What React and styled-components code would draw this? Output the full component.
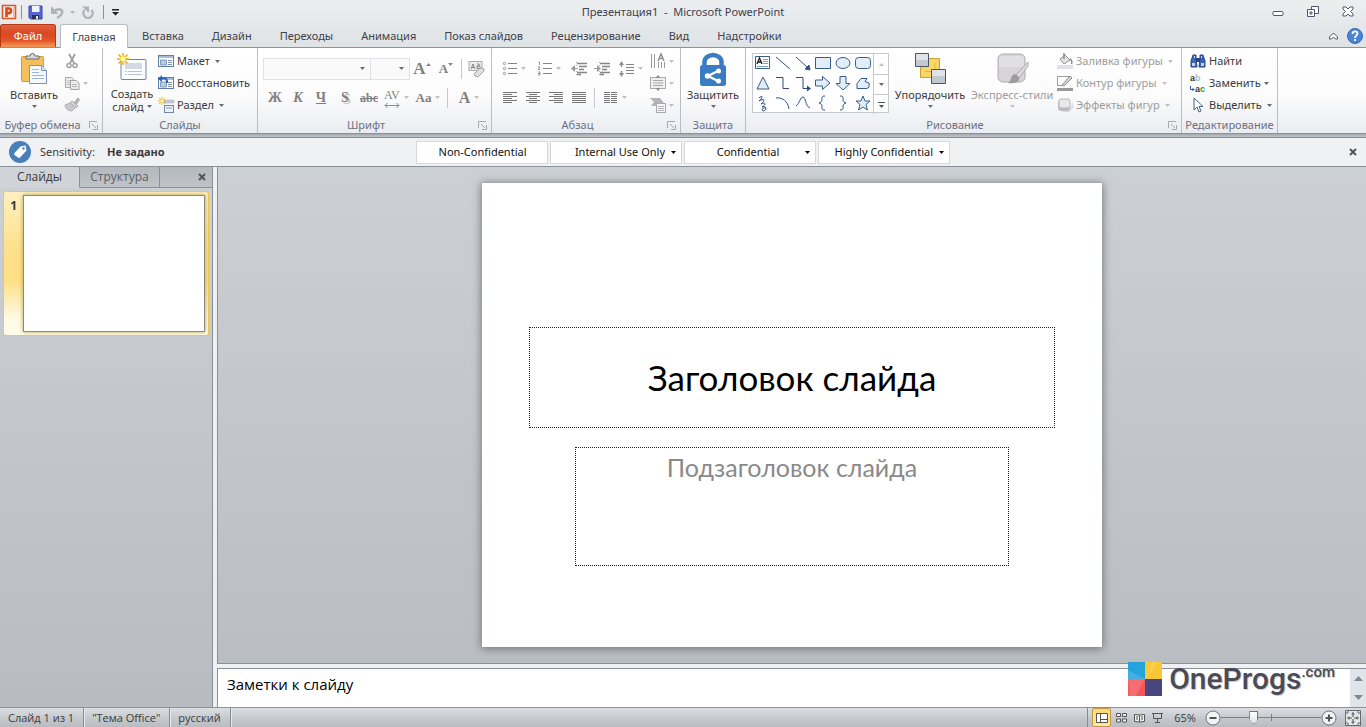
import React from 'react';
import styled, { createGlobalStyle, css } from 'styled-components';

const ui = '"Noto Sans", "Open Sans", sans-serif';
const narrow = '"Open Sans", "Noto Sans", sans-serif';

const color = {
  text: '#3b3b3b',
  disabled: '#9c9c9c',
  label: '#6d6f83',
  line: '#8b9097',
  shape: '#385d8a',
};

const GlobalStyle = createGlobalStyle`
  *, *::before, *::after { box-sizing: border-box; }
  body { margin: 0; }
  button, select, textarea, input { font: inherit; color: inherit; margin: 0; }
  button { border: 0; padding: 0; background: none; white-space: nowrap; }
`;

const Window = styled.div`
  display: flex;
  flex-direction: column;
  height: 100vh;
  min-height: 500px;
  overflow: hidden;
  background: #e3e6e9;
  font: 11px/14px ${ui};
  color: ${color.text};
`;

const Svg = styled.svg`
  display: block;
  flex: none;
  overflow: visible;
  width: ${p => p.$w || 16}px;
  height: ${p => p.$h || 16}px;
`;

const Icon = ({ w = 16, h = 16, children }) => (
  <Svg $w={w} $h={h} viewBox={`0 0 ${w} ${h}`} fill="none" aria-hidden="true">
    {children}
  </Svg>
);

const Arrow = ({ fill = '#6a6a6a' }) => (
  <Icon w={5} h={3}>
    <path d="M0 0h5L2.500 3z" fill={fill} />
  </Icon>
);

/* ---------- title bar ---------- */

const TitleBar = styled.header`
  display: grid;
  grid-template-columns: 1fr auto 1fr;
  align-items: center;
  height: 24px;
  flex: none;
  background: linear-gradient(#eceef0, #e6e9eb);
`;

const QuickAccess = styled.div`
  display: flex;
  align-items: center;
  gap: 4px;
  padding-left: 1px;

  button { padding: 0 2px; }
`;

const Title = styled.div`
  color: #3c4250;
  white-space: pre;
`;

const WindowButtons = styled.div`
  display: flex;
  justify-content: flex-end;
  gap: 23px;
  padding-right: 12px;
`;

const Divider = styled.span`
  width: 1px;
  height: ${p => p.$h || 14}px;
  margin: 0 ${p => p.$gap || 0}px;
  background: ${p => (p.$dark ? '#8e9298' : '#c6cad0')};
`;

const PlainButton = styled.button`
  display: flex;
  align-items: center;
  justify-content: center;
  gap: 3px;
`;

/* ---------- tabs ---------- */

const Tabs = styled.nav`
  display: flex;
  align-items: stretch;
  height: 24px;
  flex: none;
  background: linear-gradient(#e5e8eb, #dfe3e6);
  border-bottom: 1px solid #8d929a;
`;

const Tab = styled.button`
  padding: 0 14px;
  color: #3f4248;
  ${p => p.$file && css`
    width: 56px;
    margin-right: 4px;
    padding: 0;
    color: #fff;
    border: 1px solid #b53a12;
    border-bottom: 0;
    border-radius: 3px 3px 0 0;
    background: linear-gradient(#e2633f, #d94722 40%, #e2552a 70%, #f59a55);
  `}
  ${p => p.$active && css`
    width: 68px;
    padding: 0;
    height: 24px;
    border: 1px solid #b8bdc3;
    border-bottom: 0;
    border-radius: 3px 3px 0 0;
    background: #fff;
  `}
`;

const TabTools = styled.div`
  display: flex;
  align-items: center;
  gap: 9px;
  margin-left: auto;
  padding-right: 3px;
`;

/* ---------- ribbon ---------- */

const Ribbon = styled.div`
  display: flex;
  flex: none;
  height: 85px;
  background: linear-gradient(#fff, #fcfcfd 55%, #e9ecf0);
`;

const RibbonEdge = styled.div`
  flex: none;
  height: 5px;
  border: 1px solid #8a8f98;
  border-width: 1px 0;
  background: linear-gradient(#a3a8b0, #c2c6cb);
`;

const GroupBox = styled.section`
  display: flex;
  flex-direction: column;
  flex: none;
  width: ${p => p.$w}px;
  border-right: 1px solid #b9bec5;
`;

const GroupBody = styled.div`
  display: flex;
  height: 69px;
  padding: 2px 0 0 ${p => p.$pad}px;
`;

const GroupLabel = styled.div`
  display: flex;
  align-items: center;
  height: 16px;
  color: ${color.label};
  white-space: nowrap;

  span { flex: 1; text-align: center; }
  svg { margin: 0 4px; }
`;

const Group = ({ w, pad = 0, label, launcher, children }) => (
  <GroupBox $w={w}>
    <GroupBody $pad={pad}>{children}</GroupBody>
    <GroupLabel>
      <span>{label}</span>
      {launcher && (
        <Icon w={9} h={9}>
          <path d="M.5 7V.5H8M3 3l4 4M8.500 4v4.500H4" stroke="#a5a9b0" />
        </Icon>
      )}
    </GroupLabel>
  </GroupBox>
);

const BigButton = styled.button`
  display: flex;
  flex-direction: column;
  align-items: center;
  width: ${p => p.$w}px;
  height: 66px;
  padding-top: 3px;
  line-height: 13px;
  color: ${p => (p.disabled ? color.disabled : color.text)};

  > svg:first-child { margin-bottom: ${p => p.$gap || 4}px; }
  > svg:last-child { margin-top: 4px; }
`;

const Inline = styled.span`
  display: flex;
  align-items: center;
  gap: 3px;
`;

const Stack = styled.div`
  display: flex;
  flex-direction: column;
  align-items: flex-start;
`;

const RowButton = styled.button`
  display: flex;
  align-items: center;
  justify-content: center;
  gap: 3px;
  min-width: 16px;
  height: 22px;
  color: ${p => (p.disabled ? color.disabled : color.text)};

  > svg + span + svg { margin-left: 2px; }
`;

const Rows = styled.div`
  padding: 4px 1px 0 0;
`;

const Row = styled.div`
  display: flex;
  align-items: center;
  height: 29px;
`;

const Tool = styled.button`
  display: flex;
  align-items: center;
  justify-content: center;
  gap: 4px;
  width: ${p => p.$w || 24}px;
  height: 22px;
  color: #808080;
`;

const Glyph = styled.span`
  font: ${p => (p.$bold ? 'bold' : 'normal')} ${p => p.$size || 14}px/16px "Liberation Serif", serif;
  font-style: ${p => (p.$italic ? 'italic' : 'normal')};
  text-decoration: ${p => p.$line || 'none'};
  text-shadow: ${p => (p.$shadow ? '2px 2px 1px #bbb' : 'none')};
`;

const ComboBox = styled.span`
  display: flex;
  align-items: center;
  width: ${p => p.$w}px;
  height: 22px;
  margin-right: ${p => (p.$last ? 0 : -1)}px;
  padding-right: 5px;
  border: 1px solid #e0e2e6;
  background: #fafafb;

  select {
    flex: 1;
    min-width: 0;
    border: 0;
    background: none;
    appearance: none;
  }
`;

const Gallery = styled.div`
  display: grid;
  grid-template-columns: 1fr 15px;
  width: 137px;
  height: 60px;
  margin: 3px 4px 0 0;
  border: 1px solid #c5cad0;
  background: #fff;
`;

const Shapes = styled.div`
  display: grid;
  grid-template-columns: repeat(6, 20px);
  grid-auto-rows: 20px;
`;

const GalleryScroll = styled.div`
  display: grid;
  grid-template-rows: repeat(3, 1fr);

  button { border-left: 1px solid #c5cad0; }
  button + button { border-top: 1px solid #c5cad0; }
`;

/* ---------- sensitivity bar ---------- */

const Sensitivity = styled.div`
  display: grid;
  grid-template-columns: 1fr auto 1fr;
  align-items: center;
  flex: none;
  height: 29px;
  padding: 0 9px;
  border-bottom: 1px solid ${color.line};
  background: #eff1f3;
`;

const CurrentLabel = styled.div`
  display: flex;
  align-items: center;
  gap: 9px;

  strong { margin-left: 3px; }
`;

const LabelButtons = styled.div`
  display: flex;
  gap: 2px;
`;

const LabelButton = styled.button`
  display: flex;
  align-items: center;
  width: 132px;
  height: 23px;
  padding-right: 5px;
  border: 1px solid #d5d8dc;
  background: #fff;
  color: #111;

  span {
    flex: 1;
    text-align: ${p => (p.$end ? 'right' : 'center')};
    padding: ${p => (p.$end ? '0 6px 0 0' : '0 0 0 6px')};
  }
`;

const BarClose = styled(PlainButton)`
  justify-self: end;
`;

/* ---------- workspace ---------- */

const Workspace = styled.main`
  display: grid;
  grid-template-columns: 213px 1fr;
  flex: 1;
  min-height: 0;
`;

const SidePanel = styled.aside`
  border-right: 1px solid ${color.line};
  background: linear-gradient(#cdd1d6, #b8bbc0);
`;

const PanelTabs = styled.div`
  display: flex;
  height: 21px;
  background: linear-gradient(#b5b9be, #c0c4c9);
`;

const PanelTab = styled.button`
  width: 80px;
  border-right: 1px solid ${color.line};
  border-bottom: 1px solid ${p => (p.$active ? 'transparent' : color.line)};
  background: ${p => (p.$active ? '#d0d4d9' : 'none')};
  color: ${p => (p.$active ? '#3b3b3b' : '#5c6068')};
  font: 12px/16px ${narrow};
`;

const PanelClose = styled.button`
  display: flex;
  flex: 1;
  align-items: center;
  justify-content: flex-end;
  padding-right: 6px;
  border-bottom: 1px solid ${color.line};
`;

const Thumbnail = styled.button`
  display: flex;
  width: 206px;
  height: 145px;
  margin: 3px 0 0 3px;
  padding: 3px 3px 0 0;
  border: 1px solid #f0c850;
  border-radius: 3px;
  background: linear-gradient(#fdf0c0, #fde08a 40%, #fddf85 62%, #fffbe8 90%);

  span {
    width: 19px;
    padding: 4px 6px 0 0;
    text-align: right;
    font: bold 12px/14px ${ui};
  }
`;

const ThumbnailPage = styled.i`
  flex: 1;
  height: 137px;
  border: 1px solid #8a8a80;
  background: #fff;
  box-shadow: 0 0 4px #b5a050;
`;

const Editor = styled.div`
  display: flex;
  flex-direction: column;
  min-width: 0;
  padding-left: 4px;
  background: #eef0f2;
`;

const Canvas = styled.div`
  display: flex;
  flex: 1;
  justify-content: center;
  align-items: center;
  min-height: 0;
  border: 1px solid ${color.line};
  border-width: 0 0 1px 1px;
  background: linear-gradient(#ccd0d4, #babdc2);
`;

const Slide = styled.article`
  display: flex;
  flex-direction: column;
  align-items: center;
  width: 54%;
  max-height: 100%;
  aspect-ratio: 4 / 3;
  padding-top: 144px;
  background: #fff;
  box-shadow: 0 1px 8px 1px #767a80;
  font-family: Lato, "Open Sans", sans-serif;
`;

const TitleHolder = styled.h1`
  display: flex;
  align-items: center;
  justify-content: center;
  width: 85%;
  height: 101px;
  margin: 0 0 19px;
  border: 1px dotted #222;
  color: #000;
  font-size: 35px;
  line-height: 42px;
  font-weight: 400;
`;

const SubtitleHolder = styled.p`
  width: 70%;
  height: 119px;
  margin: 0;
  padding-top: 3px;
  border: 1px dotted #222;
  color: #8a8a8a;
  font-size: 25px;
  line-height: 32px;
  text-align: center;
`;

const NotesPane = styled.div`
  display: flex;
  flex: none;
  height: 39px;
  margin-top: 4px;
  border: 1px solid ${color.line};
  border-width: 1px 0 0 1px;
  background: #fff;

  textarea {
    flex: 1;
    padding: 5px 9px;
    border: 0;
    outline: 0;
    resize: none;
    overflow: hidden;
    background: none;
    color: #000;
    font: 15px/20px ${narrow};
  }
`;

const NotesScroll = styled.div`
  display: flex;
  flex-direction: column;
  align-items: center;
  justify-content: space-around;
  width: 16px;
  background: #dfe5ea;
`;

const Watermark = styled.div`
  position: absolute;
  right: 31px;
  bottom: 31px;
  display: flex;
  align-items: center;
  gap: 7px;
  color: #4b4b57;
  font: 500 30px/34px Roboto, sans-serif;
  text-shadow: 1px 1px 1px #c8c8cc;
  pointer-events: none;

  span { display: flex; }
  small { font-size: 15px; line-height: 20px; }
`;

/* ---------- status bar ---------- */

const StatusBar = styled.footer`
  display: flex;
  align-items: stretch;
  flex: none;
  height: 20px;
  border-top: 1px solid #8d9299;
  background: linear-gradient(#dcdfe2, #c3c7cc 60%, #b9bdc2);
`;

const StatusItem = styled.span`
  display: flex;
  align-items: center;
  padding: 0 9px 0 8px;
  border-right: 1px solid #858b93;
  box-shadow: 1px 0 #e8eaec;
  font: 11px/16px ${narrow};
`;

const ViewControls = styled.div`
  display: flex;
  align-items: center;
  gap: 2px;
  margin-left: auto;
  padding: 0 5px 0 4px;
  border-left: 1px solid #858b93;

  output { width: 36px; text-align: center; font: 11px/16px ${narrow}; }
`;

const ViewButton = styled.button`
  display: flex;
  align-items: center;
  justify-content: center;
  width: ${p => (p.$on ? 19 : 16)}px;
  height: 19px;
  border: 1px solid ${p => (p.$on ? '#c29a3c' : 'transparent')};
  border-radius: 2px;
  background: ${p => (p.$on ? 'linear-gradient(#fbd97c, #ffe99c)' : 'none')};
`;

const ZoomSlider = styled.input`
  width: 100px;
  height: 16px;
  margin: 0 -2px;
  appearance: none;
  background:
    linear-gradient(#7b8087, #7b8087) 50% 50% / 1px 7px no-repeat,
    linear-gradient(#7b8087, #7b8087) center / 100% 1px no-repeat;

  &::-webkit-slider-thumb {
    appearance: none;
    width: 9px;
    height: 13px;
    padding: 1px;
    background: linear-gradient(#fff, #e2e4e7) content-box, #70757c;
    clip-path: polygon(0 0, 100% 0, 100% 62%, 50% 100%, 0 62%);
  }
`;

const FitButton = styled(PlainButton)`
  margin-left: 6px;
`;

/* ---------- drawings ---------- */

const sun = (
  <>
    <path d="M6 0v12M0 6h12M1.500 1.500l9 9M10.500 1.500l-9 9" stroke="#edb200" strokeWidth="1.500" />
    <circle cx="6" cy="6" r="2.500" fill="#fff7a0" />
  </>
);

const PowerPointLogo = () => (
  <Icon w={16} h={17}>
    <path d="M1.500 1.500h13v13h-13z" fill="#fdeee4" stroke="#d9572c" strokeWidth="1.600" />
    <path d="M12.500 3v10" stroke="#f0b090" />
    <path d="M5.500 13V4.500h2.200a2.300 2.300 0 010 4.600H5.500" stroke="#d6481c" strokeWidth="2.600" />
  </Icon>
);

const SaveIcon = () => (
  <Icon w={15} h={15}>
    <path d="M1 1h13v13H2.500L1 12.500z" fill="#5566d0" stroke="#3645a8" />
    <path d="M4 1h7.500v6H4z" fill="#eef3fc" />
    <path d="M4 10h7v4H4z" fill="#2b3352" />
    <path d="M8 11h2v3H8z" fill="#dfe6f4" />
  </Icon>
);

const UndoIcon = () => (
  <Icon w={13} h={13}>
    <path d="M3 5c5-3 9-1.500 8 2-.5 2-2.500 3.500-5 5" stroke="#b0b3b8" strokeWidth="2.600" />
    <path d="M0 0v8h7.500z" fill="#b0b3b8" />
  </Icon>
);

const RedoIcon = () => (
  <Icon w={14} h={13}>
    <path d="M3.500 4a4.700 4.700 0 107 0" stroke="#b0b3b8" strokeWidth="2.400" />
    <path d="M1 .5h7V7z" fill="#b0b3b8" />
  </Icon>
);

const PasteIcon = () => (
  <Icon w={28} h={31}>
    <rect x="1.500" y="3.500" width="22" height="25" rx="1" fill="#f3c05d" stroke="#d09a40" />
    <path d="M6 6V3h4a2.500 2.500 0 015 0h4v3z" fill="#d8d8d8" stroke="#6c6c6c" />
    <path d="M9.500 12.500h12l5 5v13h-17z" fill="#f6fafe" stroke="#7b93b8" />
    <path d="M21.500 12.500v5h5" fill="#dbe6f2" stroke="#7b93b8" />
    <path d="M12 16.500h7M12 19.500h7M12 22.500h12M12 25.500h12" stroke="#9cb5d6" />
  </Icon>
);

const CutIcon = () => (
  <Icon w={12} h={16}>
    <path d="M3 1l5 9M9 1l-5 9" stroke="#a0a0a0" strokeWidth="1.800" />
    <circle cx="3" cy="12.500" r="2" stroke="#a0a0a0" strokeWidth="1.500" />
    <circle cx="9" cy="12.500" r="2" stroke="#a0a0a0" strokeWidth="1.500" />
  </Icon>
);

const CopyIcon = () => (
  <Icon>
    <path d="M1.500 2.500h6l2 2v8h-8z" fill="#ececee" stroke="#aaa" />
    <path d="M3 5.500h4M3 7.500h4M3 9.500h4" stroke="#c0c0c0" />
    <path d="M6.500 5.500h6l2.500 2.500v6.500h-8.500z" fill="#ececee" stroke="#a2a2a2" />
    <path d="M8 9.500h5M8 11.500h5" stroke="#b4b4b4" />
  </Icon>
);

const BrushIcon = () => (
  <Icon>
    <path d="M10 6l4-5 1.500 1.500L12 8z" fill="#b8b8b8" stroke="#a4a4a4" />
    <path d="M8 4l6 5-2 2-6-5z" fill="#dadada" stroke="#acacac" />
    <path d="M6 6L1 8c0 3 3 6 7 6l4-4z" fill="#c8c8c8" stroke="#b4b4b4" />
  </Icon>
);

const NewSlideIcon = () => (
  <Icon w={30} h={28}>
    <rect x="4" y="6.500" width="25" height="20" rx="1" fill="#fafcfe" stroke="#6c86a8" />
    <path d="M8 10h17v6H8z" fill="#d2d9e4" />
    <path d="M8 18.500h2m1 0h14M8 21.500h2m1 0h14" stroke="#b8c3d4" />
    {sun}
  </Icon>
);

const LayoutIcon = ({ arrow }) => (
  <Icon>
    <rect x=".5" y="2.500" width="15" height="11" fill="#fff" stroke="#5f7ea8" />
    <path d="M1 3h14v2H1z" fill="#a7bdd8" />
    <path d="M2.500 7h6v5h-6z" fill="#bccadd" stroke="#8298ba" />
    <path d="M10 7.500h4M10 9.500h4M10 11.500h4" stroke="#7890b4" />
    {arrow && (
      <>
        <path d="M2 4.500C6 2 9.500 3 9 8" stroke="#2a62c0" strokeWidth="2" />
        <path d="M0 4l4-4v7z" fill="#2a62c0" />
      </>
    )}
  </Icon>
);

const SectionIcon = () => (
  <Icon>
    <path d="M6 3h10v3H6z" fill="#c3cad5" stroke="#a5afbf" strokeWidth=".5" />
    <rect x="6.500" y="8.500" width="9" height="7" fill="#eef3f9" stroke="#7288a8" />
    <path d="M8 10h6v2H8z" fill="#b6c6da" />
    <g transform="scale(.65)">{sun}</g>
  </Icon>
);

const ListIcon = ({ marks }) => (
  <Icon w={14} h={13}>
    {marks === 'dots'
      ? [1.5, 6.5, 11.5].map(y => <circle key={y} cx="1.500" cy={y} r="1.200" stroke="#999" />)
      : <path d="M.5 0h1v3M0 5h2L0 7.500h2M0 10h2v1.500H0h2V13H0" stroke="#999" />}
    <path d="M5 1.500h9M5 6.500h9M5 11.500h9" stroke="#858585" />
  </Icon>
);

const IndentIcon = ({ right }) => (
  <Icon w={16} h={14}>
    <path d="M6 1.500h10M8 4.500h8M8 7.500h5M6 10.500h10M6 12.500h4" stroke="#858585" strokeWidth="1.500" />
    <path d={right ? 'M0 6h3V3l4 3.500L3 10V7H0z' : 'M7 6H4V3L0 6.500 4 10V7h3z'} fill="#999" />
    <path d="M5.500 0v14" stroke="#aaa" strokeDasharray="1 2" />
  </Icon>
);

const SpacingIcon = () => (
  <Icon w={15} h={16}>
    <path d="M2.500 3v3M2.500 10v3" stroke="#8f8f8f" strokeWidth="1.500" />
    <path d="M0 4l2.500-4L5 4zM0 12l2.500 4L5 12z" fill="#8f8f8f" />
    <path d="M7 3.500h8M7 6.500h8M7 9.500h8M7 12.500h8" stroke="#858585" />
  </Icon>
);

const alignPaths = {
  left: 'M0 .5h14M0 2.500h9M0 4.500h14M0 6.500h9M0 8.500h14M0 10.500h9',
  center: 'M0 .5h14M3 2.500h8M0 4.500h14M3 6.500h8M0 8.500h14M3 10.500h8',
  right: 'M0 .5h14M5 2.500h9M0 4.500h14M5 6.500h9M0 8.500h14M5 10.500h9',
  justify: 'M0 .5h14M0 2.500h14M0 4.500h14M0 6.500h14M0 8.500h14M0 10.500h14',
  columns: 'M0 .5h6m1 0h6M0 2.500h6m1 0h6M0 4.500h6m1 0h6M0 6.500h6m1 0h6M0 8.500h6m1 0h6M0 10.500h6m1 0h6',
};

const AlignIcon = ({ kind }) => (
  <Icon w={14} h={11}>
    <path d={alignPaths[kind]} stroke="#777" />
  </Icon>
);

const DirectionIcon = () => (
  <Icon>
    <path d="M1.500 1v14M4.500 1v14M8.500 9v6M11.500 9v6M14.500 9v6" stroke="#999" />
    <path d="M8 8l3-7 3 7M9 5.500h4" stroke="#888" strokeWidth="1.300" />
  </Icon>
);

const AnchorIcon = () => (
  <Icon>
    <rect x=".5" y="2.500" width="15" height="11" fill="#efeff1" stroke="#aaa" />
    <path d="M3 5.500h10M3 8h10M3 10.500h10" stroke="#a8a8a8" />
    <path d="M5.500 3L8 0l2.500 3zM5.500 13L8 16l2.500-3z" fill="#8c8c8c" />
  </Icon>
);

const SmartArtIcon = () => (
  <Icon>
    <path d="M0 1h10l4 5-3 3H1l3-4z" fill="#b4b4b4" />
    <rect x="6.500" y="6.500" width="9" height="9" fill="#f6f6f6" stroke="#aaa" />
    <path d="M8 9.500h6M8 11.500h6M8 13.500h6" stroke="#b5b5b5" />
  </Icon>
);

const EraseIcon = () => (
  <Icon w={18} h={18}>
    <rect x="1" y="1.500" width="13" height="9" fill="#ececee" stroke="#aaa" />
    <path d="M3 9l2-5 2 5M4 7.500h2M9 4h1.500a1 1 0 010 2H9m0 0h2a1 1 0 010 2.500H9z" stroke="#888" />
    <path d="M6 14l6-6 4 1v2l-6 6-3-1z" fill="#e4dfe1" stroke="#aaa2a5" />
  </Icon>
);

const SpreadArrow = () => (
  <Icon w={16} h={5}>
    <path d="M1 2.500h14M3.500 0L1 2.500 3.500 5M12.500 0L15 2.500 12.500 5" stroke="#8a8a8a" />
  </Icon>
);

const LockIcon = () => (
  <Icon w={28} h={33}>
    <path d="M5.500 14V9a8.500 7 0 0117 0v5" stroke="#3a7cc4" strokeWidth="4.500" />
    <rect x="1" y="12" width="26" height="21" rx="2.500" fill="#3a7cc4" />
    <path d="M19 18L9 23l10 5" stroke="#fff" strokeWidth="2.500" />
    <circle cx="19.500" cy="18" r="2.500" fill="#fff" />
    <circle cx="8.500" cy="23" r="2.700" fill="#fff" />
    <circle cx="19.500" cy="28" r="2.500" fill="#fff" />
  </Icon>
);

const ArrangeIcon = () => (
  <Icon w={31} h={31}>
    <path d="M10.500 5.500h14v13h-5v6h-14v-13h5z" fill="#f8d667" stroke="#c9a030" />
    <path d="M10 18.500h10V10" stroke="#dfb840" />
    <path d="M.5.5h13v13H.5zM16.500 16.500h14v14h-14z" fill="#c3c9d0" stroke="#4c5566" />
    <path d="M1 1h12v6H1zM17 17h13v6H17z" fill="#dfe3e7" />
  </Icon>
);

const StylesIcon = () => (
  <Icon w={31} h={31}>
    <rect x="1" y="1" width="27" height="28" rx="5" fill="#d6d4d9" stroke="#aeacb1" />
    <path d="M5 3h19a3 3 0 013 3v8H2V6a3 3 0 013-3z" fill="#e0dfe3" />
    <path d="M31 9L19 22l3 3 9-12z" fill="#dcdcde" stroke="#aaa" />
    <path d="M18 21c-5 1-3 7-7 9 6 1 12 0 11-6z" fill="#9b9b9b" />
  </Icon>
);

const FillIcon = () => (
  <Icon>
    <path d="M3 6l5-4 5 5-6 4z" fill="#e4e4e6" stroke="#8f8f8f" />
    <path d="M7 6V0M13 6c2 1 2 3 1.500 5" stroke="#8f8f8f" strokeWidth="1.600" />
    <path d="M0 12h16v4H0z" fill="#e3e1e6" />
  </Icon>
);

const OutlineIcon = () => (
  <Icon>
    <path d="M12 1.500H.5v9H6" stroke="#9c9c9c" />
    <path d="M5 10l8-9 2 2-8 8z" fill="#d4d4d6" stroke="#8f8f8f" />
    <path d="M0 13h16v3H0z" fill="#9a9a9a" />
  </Icon>
);

const EffectsIcon = () => (
  <Icon>
    <path d="M4 15h8l4-4V5l-3 7z" fill="#dadade" />
    <rect x="1" y="3" width="12" height="11" rx="3" fill="#bfbdc2" />
    <rect x="2" y="2" width="11" height="9" rx="2" fill="#e9e8eb" stroke="#b8b6bb" />
  </Icon>
);

const FindIcon = () => (
  <Icon>
    <path d="M3 2h3v4l1 8H1V8zM10 2h3l2 6v6H9l1-8z" fill="#3f66b4" stroke="#27448a" />
    <path d="M6 5h4v4H6z" fill="#27448a" />
    <path d="M2 10h3v3H2zM11 10h3v3h-3zM4 3h1v2H4zM11 3h1v2h-1z" fill="#c4d6f2" />
  </Icon>
);

const ReplaceGlyph = styled.span`
  display: grid;
  grid-template-rows: 11px 11px;
  width: 16px;
  font: bold 9px/10px "Liberation Sans", sans-serif;
  text-align: left;

  i { font-style: normal; color: #b9b9b9; }
  b + b { color: #1f9a32; }
  div { display: flex; align-items: center; }
`;

const SelectIcon = () => (
  <Icon>
    <path d="M4 1v12l3-3 2 5 2-1-2-4.500h4z" fill="#fff" stroke="#4a6285" />
  </Icon>
);

const TagIcon = () => (
  <Icon w={22} h={22}>
    <circle cx="11" cy="11" r="11" fill="#4a7ebb" />
    <path d="M5.500 12l6-6.500 5-1 1 5-6.500 7a1.500 1.500 0 01-2 0L5.500 14a1.500 1.500 0 010-2z" fill="#fff" />
    <circle cx="14.500" cy="7.500" r="1.200" fill="#4a7ebb" />
  </Icon>
);

const CrossIcon = () => (
  <Icon w={8} h={8}>
    <path d="M1 1l6 6M7 1L1 7" stroke="#52565c" strokeWidth="2" />
  </Icon>
);

const shapes = [
  <g key="text"><path d="M2.500 3.500h14v12h-14z" fill="#fff" stroke={color.shape} /><path d="M4 11l2.500-6L9 11M5 9h3" stroke="#222" strokeWidth="1.300" /><path d="M10 6.500h5M10 8.500h5M10 10.500h5M4 13.500h11" stroke="#7d9cc6" /></g>,
  <path key="line" d="M3 4l14 12" stroke="#2f4d85" />,
  <g key="arrow"><path d="M3 4l12 11" stroke="#2f4d85" /><path d="M17 17l-5-1 4-4z" fill="#2f4d85" /></g>,
  <path key="rect" d="M2.500 4.500h15v11h-15z" />,
  <ellipse key="oval" cx="10" cy="10" rx="7" ry="5.500" />,
  <rect key="round" x="2.500" y="4.500" width="15" height="11" rx="3" />,
  <path key="triangle" d="M10 4l6 12H4z" />,
  <path key="elbow" d="M3 4.500h7v11h6" fill="none" stroke="#2f4d85" />,
  <g key="elbowArrow"><path d="M3 4.500h7v11h5" fill="none" stroke="#2f4d85" /><path d="M18 15.500l-4-3v6z" fill="#2f4d85" stroke="none" /></g>,
  <path key="right" d="M2.500 7h7V3.500L17 10l-7.500 6.500V13h-7z" />,
  <path key="down" d="M7 3.500h6v7h4L10 17l-7-6.500h4z" />,
  <path key="freeform" d="M4 15.500v-5l4-5h6l-2 3 4 1.500v4l-2 1.500z" />,
  <path key="scribble" d="M6 5c4-4 4 0 0 3 5-3 7-1 2 3 4-2 6 0 1 3 5-2 5 4 1 4-2-1 0-4 3-3" fill="none" stroke="#2f4d85" />,
  <path key="arc" d="M3 5c6-1 12 3 13 11" fill="none" stroke="#2f4d85" />,
  <path key="curve" d="M3 13c4-3 4-9 7-9s2 9 7 11" fill="none" stroke="#2f4d85" />,
  <path key="brace" d="M12 3c-4 0-3 2-3 4 0 1-1 2.500-3 3 2 .5 3 2 3 3 0 2-1 4 3 4" fill="none" stroke="#2f4d85" />,
  <path key="braceEnd" d="M7 3c4 0 3 2 3 4 0 1 1 2.500 3 3-2 .5-3 2-3 3 0 2 1 4-3 4" fill="none" stroke="#2f4d85" />,
  <path key="star" d="M10 3l2 5h5l-4 3.500 1.500 5.500-4.500-3-4.500 3L7 11.500 3 8h5z" />,
];

const smallArrow = '#c0c0c0';

const Clipboard = () => (
  <Group w={103} pad={4} label="Буфер обмена" launcher>
    <BigButton $w={60}>
      <PasteIcon />Вставить<Arrow />
    </BigButton>
    <Stack>
      <RowButton aria-label="Вырезать"><CutIcon /></RowButton>
      <RowButton aria-label="Копировать"><CopyIcon /><Arrow fill={smallArrow} /></RowButton>
      <RowButton aria-label="Формат по образцу"><BrushIcon /></RowButton>
    </Stack>
  </Group>
);

const Slides = () => (
  <Group w={155} pad={3} label="Слайды">
    <BigButton $w={52} $gap={6}>
      <NewSlideIcon />
      <span>Создать</span>
      <Inline>слайд<Arrow /></Inline>
    </BigButton>
    <Stack>
      <RowButton><LayoutIcon /><span>Макет</span><Arrow /></RowButton>
      <RowButton><LayoutIcon arrow /><span>Восстановить</span></RowButton>
      <RowButton><SectionIcon /><span>Раздел</span><Arrow /></RowButton>
    </Stack>
  </Group>
);

const Font = () => (
  <Group w={234} pad={5} label="Шрифт" launcher>
    <Rows>
      <Row>
        <ComboBox $w={108}><select aria-label="Шрифт" disabled /><Arrow /></ComboBox>
        <ComboBox $w={40} $last><select aria-label="Размер шрифта" disabled /><Arrow /></ComboBox>
        <Tool $w={26}><Inline><Glyph $size={17} $bold>A</Glyph><Icon w={4} h={12}><path d="M-3 3l2.500-3L2 3z" fill="#888" /></Icon></Inline></Tool>
        <Tool $w={22}><Inline><Glyph $size={13} $bold>A</Glyph><Icon w={4} h={12}><path d="M-3 0h5L-.5 3z" fill="#888" /></Icon></Inline></Tool>
        <Divider $h={20} $gap={3} />
        <Tool aria-label="Очистить формат"><EraseIcon /></Tool>
      </Row>
      <Row>
        <Tool><Glyph $bold>Ж</Glyph></Tool>
        <Tool $w={22}><Glyph $bold $italic>К</Glyph></Tool>
        <Tool><Glyph $bold $line="underline">Ч</Glyph></Tool>
        <Tool><Glyph $bold $shadow>S</Glyph></Tool>
        <Tool><Glyph $size={12} $bold $line="line-through">abc</Glyph></Tool>
        <Tool $w={31}>
          <Stack><Glyph $size={12}>AV</Glyph><SpreadArrow /></Stack>
          <Arrow fill={smallArrow} />
        </Tool>
        <Tool $w={32}><Glyph $bold $size={13}>Aa</Glyph><Arrow fill={smallArrow} /></Tool>
        <Divider $h={20} $gap={3} />
        <Tool $w={36}><Glyph $bold $size={16}>A</Glyph><Arrow fill={smallArrow} /></Tool>
      </Row>
    </Rows>
  </Group>
);

const Paragraph = () => (
  <Group w={189} pad={6} label="Абзац" launcher>
    <Rows>
      <Row>
        <Tool $w={33} aria-label="Маркеры"><ListIcon marks="dots" /><Arrow fill={smallArrow} /></Tool>
        <Tool $w={36} aria-label="Нумерация"><ListIcon /><Arrow fill={smallArrow} /></Tool>
        <Tool aria-label="Уменьшить отступ"><IndentIcon /></Tool>
        <Tool $w={22} aria-label="Увеличить отступ"><IndentIcon right /></Tool>
        <Tool $w={36} aria-label="Интервал"><SpacingIcon /><Arrow fill={smallArrow} /></Tool>
      </Row>
      <Row>
        {['left', 'center', 'right', 'justify'].map(kind => (
          <Tool key={kind} $w={23} aria-label={kind}><AlignIcon kind={kind} /></Tool>
        ))}
        <Divider $h={20} $gap={4} />
        <Tool $w={32} aria-label="Колонки"><AlignIcon kind="columns" /><Arrow fill={smallArrow} /></Tool>
      </Row>
    </Rows>
    <Stack>
      <RowButton aria-label="Направление текста"><DirectionIcon /><Arrow fill={smallArrow} /></RowButton>
      <RowButton aria-label="Выровнять текст"><AnchorIcon /><Arrow fill={smallArrow} /></RowButton>
      <RowButton aria-label="SmartArt"><SmartArtIcon /><Arrow fill={smallArrow} /></RowButton>
    </Stack>
  </Group>
);

const Drawing = () => (
  <Group w={436} pad={6} label="Рисование" launcher>
    <Gallery>
      <Shapes>
        {shapes.map(shape => (
          <Svg key={shape.key} $w={20} $h={20} viewBox="0 1 20 20" fill="#e2edf8" stroke={color.shape}>{shape}</Svg>
        ))}
      </Shapes>
      <GalleryScroll>
        <PlainButton aria-label="Вверх"><Icon w={5} h={3}><path d="M0 3h5L2.500 0z" fill="#c0c0c0" /></Icon></PlainButton>
        <PlainButton aria-label="Вниз"><Arrow /></PlainButton>
        <PlainButton aria-label="Ещё"><Icon w={7} h={6}><path d="M0 0h7v1H0zM1 3h5L3.500 6z" fill="#555" /></Icon></PlainButton>
      </GalleryScroll>
    </Gallery>
    <BigButton $w={74}><ArrangeIcon />Упорядочить<Arrow /></BigButton>
    <BigButton $w={90} disabled><StylesIcon />Экспресс-стили<Arrow fill={smallArrow} /></BigButton>
    <Stack>
      <RowButton disabled><FillIcon /><span>Заливка фигуры</span><Arrow fill={smallArrow} /></RowButton>
      <RowButton disabled><OutlineIcon /><span>Контур фигуры</span><Arrow fill={smallArrow} /></RowButton>
      <RowButton disabled><EffectsIcon /><span>Эффекты фигур</span><Arrow fill={smallArrow} /></RowButton>
    </Stack>
  </Group>
);

const Editing = () => (
  <Group w={96} pad={8} label="Редактирование">
    <Stack>
      <RowButton><FindIcon /><span>Найти</span></RowButton>
      <RowButton>
        <ReplaceGlyph>
          <div><b>a</b><i>b</i></div>
          <div><Icon w={5} h={6}><path d="M.5 0v3.500H4M2.500 2L4 3.500 2.500 5" stroke="#2f5aa8" /></Icon><b>a</b><b>c</b></div>
        </ReplaceGlyph>
        <span>Заменить</span><Arrow />
      </RowButton>
      <RowButton><SelectIcon /><span>Выделить</span><Arrow /></RowButton>
    </Stack>
  </Group>
);

const tabs = ['Вставка', 'Дизайн', 'Переходы', 'Анимация', 'Показ слайдов', 'Рецензирование', 'Вид', 'Надстройки'];

const App = () => (
  <Window>
    <GlobalStyle />
    <TitleBar>
      <QuickAccess>
        <PowerPointLogo />
        <Divider $dark />
        <PlainButton aria-label="Сохранить"><SaveIcon /></PlainButton>
        <PlainButton aria-label="Отменить"><UndoIcon /></PlainButton>
        <Arrow fill="#b2b5ba" />
        <PlainButton aria-label="Повторить"><RedoIcon /></PlainButton>
        <Divider $dark $gap={2} />
        <PlainButton aria-label="Настройка панели">
          <Icon w={7} h={7}><path d="M0 0h7v1.500H0zM0 3h7L3.500 6.500z" fill="#222" /></Icon>
        </PlainButton>
      </QuickAccess>
      <Title>Презентация1  -  Microsoft PowerPoint</Title>
      <WindowButtons>
        <PlainButton aria-label="Свернуть"><Icon w={12} h={12}><rect x="1" y="5.500" width="10" height="4" rx="1" fill="#fff" stroke="#51566b" /></Icon></PlainButton>
        <PlainButton aria-label="Восстановить">
          <Icon w={12} h={12}>
            <path d="M4.500.5h7v7h-7z" fill="#fff" stroke="#51566b" />
            <path d="M.5 3.500h7v7h-7z" fill="#fff" stroke="#51566b" /><path d="M3 6h2v2H3z" stroke="#51566b" />
          </Icon>
        </PlainButton>
        <PlainButton aria-label="Закрыть">
          <Icon w={12} h={12}><path d="M1 1h3l2 2 2-2h3v2L8.500 5.500 11 8v2H8L6 8l-2 2H1V8l2.500-2.500L1 3z" fill="#fff" stroke="#51566b" /></Icon>
        </PlainButton>
      </WindowButtons>
    </TitleBar>

    <Tabs>
      <Tab $file>Файл</Tab>
      <Tab $active>Главная</Tab>
      {tabs.map(name => <Tab key={name}>{name}</Tab>)}
      <TabTools>
        <PlainButton aria-label="Свернуть ленту"><Icon w={9} h={8}><path d="M4.500 1L8.500 5v2h-2l-2-2-2 2h-2V5z" fill="#fff" stroke="#555" /></Icon></PlainButton>
        <PlainButton aria-label="Справка">
          <Icon>
            <circle cx="8" cy="8" r="7.500" fill="#4a84d4" stroke="#3568b4" />
            <path d="M5.500 6c0-3.500 5-3.500 5-.5C10.500 7.500 8 7.500 8 10M8 11v2" stroke="#fff" strokeWidth="1.800" />
          </Icon>
        </PlainButton>
      </TabTools>
    </Tabs>

    <Ribbon>
      <Clipboard />
      <Slides />
      <Font />
      <Paragraph />
      <Group w={65} label="Защита">
        <BigButton $w={65} $gap={2}><LockIcon />Защитить<Arrow /></BigButton>
      </Group>
      <Drawing />
      <Editing />
    </Ribbon>
    <RibbonEdge />

    <Sensitivity>
      <CurrentLabel><TagIcon />Sensitivity:<strong>Не задано</strong></CurrentLabel>
      <LabelButtons>
        <LabelButton><span>Non-Confidential</span></LabelButton>
        <LabelButton $end><span>Internal Use Only</span><Arrow fill="#000" /></LabelButton>
        <LabelButton><span>Confidential</span><Arrow fill="#000" /></LabelButton>
        <LabelButton $end><span>Highly Confidential</span><Arrow fill="#000" /></LabelButton>
      </LabelButtons>
      <BarClose aria-label="Закрыть панель"><CrossIcon /></BarClose>
    </Sensitivity>

    <Workspace>
      <SidePanel>
        <PanelTabs>
          <PanelTab $active>Слайды</PanelTab>
          <PanelTab>Структура</PanelTab>
          <PanelClose aria-label="Закрыть"><CrossIcon /></PanelClose>
        </PanelTabs>
        <Thumbnail aria-label="Слайд 1"><span>1</span><ThumbnailPage /></Thumbnail>
      </SidePanel>
      <Editor>
        <Canvas>
          <Slide>
            <TitleHolder>Заголовок слайда</TitleHolder>
            <SubtitleHolder>Подзаголовок слайда</SubtitleHolder>
          </Slide>
        </Canvas>
        <NotesPane>
          <textarea aria-label="Заметки" defaultValue="Заметки к слайду" />
          <NotesScroll>
            <Icon w={9} h={5}><path d="M0 5h9L4.500 0z" fill="#7f8a94" /></Icon>
            <Icon w={9} h={5}><path d="M0 0h9L4.500 5z" fill="#7f8a94" /></Icon>
          </NotesScroll>
        </NotesPane>
      </Editor>
    </Workspace>

    <StatusBar>
      <StatusItem>Слайд 1 из 1</StatusItem>
      <StatusItem>"Тема Office"</StatusItem>
      <StatusItem>русский</StatusItem>
      <ViewControls>
        <ViewButton $on aria-label="Обычный"><Icon w={12} h={10}><path d="M.5.5h11v9H.5zM4.500.5v9M4.500 6.500h7" fill="#fff" stroke="#555" /></Icon></ViewButton>
        <ViewButton aria-label="Сортировщик"><Icon w={11} h={10}><path d="M.5.5h4v3h-4zM6.500.5h4v3h-4zM.5 6h4v3h-4zM6.500 6h4v3h-4z" fill="#eee" stroke="#555" /></Icon></ViewButton>
        <ViewButton aria-label="Чтение"><Icon w={11} h={10}><path d="M.5 1.500l5 .5 5-.5v7l-5 .5-5-.5zM5.500 2v7M2 4h2M2 6h2M7 4h2M7 6h2" fill="#eee" stroke="#555" /></Icon></ViewButton>
        <ViewButton aria-label="Показ слайдов"><Icon w={11} h={10}><path d="M0 .5h11M1.500.5v5h8v-5M5.500 5.500v4M3 9.500h5" stroke="#555" /></Icon></ViewButton>
        <output>65%</output>
        <PlainButton aria-label="Уменьшить"><Icon><circle cx="8" cy="8" r="7" fill="#f3f4f6" stroke="#6d7278" /><path d="M4.500 8h7" stroke="#555" strokeWidth="2" /></Icon></PlainButton>
        <ZoomSlider type="range" min="10" max="100" defaultValue="38" aria-label="Масштаб" />
        <PlainButton aria-label="Увеличить"><Icon><circle cx="8" cy="8" r="7" fill="#f3f4f6" stroke="#6d7278" /><path d="M4.500 8h7M8 4.500v7" stroke="#555" strokeWidth="2" /></Icon></PlainButton>
        <FitButton aria-label="Вписать слайд">
          <Icon>
            <path d="M.5.5h15v15H.5z" fill="#e4e6e9" stroke="#666b72" />
            <path d="M8 2v5M8 9v5M2 8h5M9 8h5" stroke="#555" />
            <path d="M6.500 4h3M6.500 12h3M4 6.500v3M12 6.500v3" stroke="#555" />
            <path d="M2 4V2h2M12 2h2v2M14 12v2h-2M4 14H2v-2" stroke="#666b72" />
          </Icon>
        </FitButton>
      </ViewControls>
    </StatusBar>

    <Watermark>
      <Icon w={34} h={34}>
        <path d="M0 0h17v17H0z" fill="#24a3dc" />
        <path d="M17 0h17v17H17z" fill="#f8c733" />
        <path d="M0 17h17v17H0z" fill="#f4545a" />
        <path d="M17 17h17v17H17z" fill="#48457f" />
        <path d="M0 17V8L17 17l8-17h5L17 17l-9 17H2z" fill="#fff" opacity=".15" />
      </Icon>
      <span>OneProgs<small>.com</small></span>
    </Watermark>
  </Window>
);

export default App;
